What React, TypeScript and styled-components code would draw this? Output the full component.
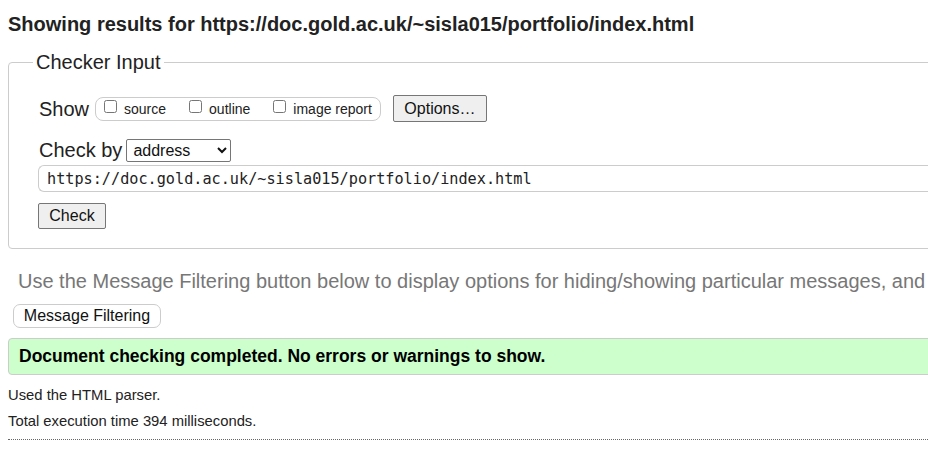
import React from "react";
import styled, { createGlobalStyle } from "styled-components";

const Global = createGlobalStyle`
  html, body { margin: 0; padding: 0; background: #fff; overflow: hidden; }
  body { font-family: Arial, "Liberation Sans", sans-serif; color: #222; }
`;

const Page = styled.div`
  width: 1400px;
  padding: 0 8px;
  box-sizing: border-box;
`;

const Heading = styled.h2`
  margin: 0;
  padding-top: 12px;
  font-size: 20px;
  line-height: 24px;
  font-weight: bold;
  color: #222;
`;

const Box = styled.fieldset`
  margin: 15px 0 0 0;
  padding: 0 0 19px 0;
  border: 1px solid #ccc;
  border-radius: 4px;
  display: flex;
  flex-direction: column;
`;

const Legend = styled.legend`
  margin-left: 24px;
  padding: 0 3px;
  font-size: 20px;
  line-height: 22px;
  color: #222;
`;

const Row = styled.div<{ $top: number; $left?: number }>`
  display: flex;
  align-items: center;
  margin: ${(p) => p.$top}px 0 0 ${(p) => p.$left ?? 30}px;
`;

const Label = styled.span<{ $gap?: number }>`
  font-size: 20px;
  line-height: 24px;
  margin-right: ${(p) => p.$gap ?? 6}px;
`;

const Group = styled.span`
  display: inline-flex;
  align-items: center;
  height: 22px;
  border: 1px solid #ccc;
  border-radius: 8px;
  padding: 0 8px 0 8px;
`;

const Opt = styled.label<{ $last?: boolean }>`
  display: inline-flex;
  align-items: flex-end;
  font-size: 14px;
  line-height: 16px;
  margin-right: ${(p) => (p.$last ? 0 : 23)}px;
  color: #222;
`;

const Check = styled.input.attrs({ type: "checkbox" })`
  width: 13px;
  height: 13px;
  margin: 0 7px 4px 0;
`;

const Button = styled.button<{ $w: number; $h: number; $ml?: number }>`
  width: ${(p) => p.$w}px;
  height: ${(p) => p.$h}px;
  margin-left: ${(p) => p.$ml ?? 0}px;
  padding: 0;
  font-family: Arial, "Liberation Sans", sans-serif;
  font-size: 16px;
  color: #111;
  background: #efefef;
  border: 1px solid #767676;
  border-radius: 2px;
`;

const Select = styled.select`
  width: 105px;
  height: 23px;
  font-family: Arial, "Liberation Sans", sans-serif;
  font-size: 16px;
  color: #111;
  background: #fff;
  border: 1px solid #767676;
  border-radius: 2px;
  padding: 0 2px;
`;

const UrlInput = styled.input`
  margin: 3px 0 0 29px;
  height: 27px;
  box-sizing: border-box;
  border: 1px solid #ccc;
  border-radius: 6px 0 0 6px;
  border-right: none;
  padding: 0 8px;
  font-family: "DejaVu Sans Mono", "Liberation Mono", monospace;
  font-size: 15.2px;
  color: #222;
  background: #fff;
`;

const Note = styled.p`
  margin: 20px 0 0 10px;
  font-size: 20px;
  line-height: 24px;
  color: #777;
  white-space: nowrap;
`;

const FilterButton = styled.button`
  display: block;
  margin: 11px 0 0 5px;
  width: 148px;
  height: 24px;
  padding: 0;
  font-family: Arial, "Liberation Sans", sans-serif;
  font-size: 16px;
  color: #111;
  background: #fff;
  border: 1px solid #ccc;
  border-radius: 7px;
`;

const Success = styled.div`
  margin-top: 10px;
  height: 37px;
  box-sizing: border-box;
  display: flex;
  align-items: center;
  padding-left: 10px;
  background: #ccffcc;
  border: 1px solid #ccc;
  border-radius: 4px;
  font-weight: bold;
  font-size: 17.5px;
  color: #000;
`;

const Detail = styled.p<{ $top: number }>`
  margin: ${(p) => p.$top}px 0 0 0;
  font-size: 14.8px;
  line-height: 18px;
  color: #222;
`;

const Rule = styled.hr`
  margin: 9px 0 0 0;
  border: none;
  border-top: 1px dotted #666;
`;

export default function App() {
  return (
    <>
      <Global />
      <Page>
        <Heading>Showing results for https://doc.gold.ac.uk/~sisla015/portfolio/index.html</Heading>
        <Box>
          <Legend>Checker Input</Legend>
          <Row $top={22}>
            <Label>Show</Label>
            <Group>
              <Opt>
                <Check />
                source
              </Opt>
              <Opt>
                <Check />
                outline
              </Opt>
              <Opt $last>
                <Check />
                image report
              </Opt>
            </Group>
            <Button $w={94} $h={27} $ml={12}>
              Options…
            </Button>
          </Row>
          <Row $top={16}>
            <Label $gap={4}>Check by</Label>
            <Select defaultValue="address">
              <option value="address">address</option>
              <option value="file">file upload</option>
              <option value="text">text input</option>
            </Select>
          </Row>
          <UrlInput defaultValue="https://doc.gold.ac.uk/~sisla015/portfolio/index.html" />
          <Row $top={11} $left={29}>
            <Button $w={68} $h={26}>
              Check
            </Button>
          </Row>
        </Box>
        <Note>
          Use the Message Filtering button below to display options for hiding/showing particular messages, and to see total counts of errors and warnings.
        </Note>
        <FilterButton>Message Filtering</FilterButton>
        <Success>Document checking completed. No errors or warnings to show.</Success>
        <Detail $top={11}>Used the HTML parser.</Detail>
        <Detail $top={8}>Total execution time 394 milliseconds.</Detail>
        <Rule />
      </Page>
    </>
  );
}
